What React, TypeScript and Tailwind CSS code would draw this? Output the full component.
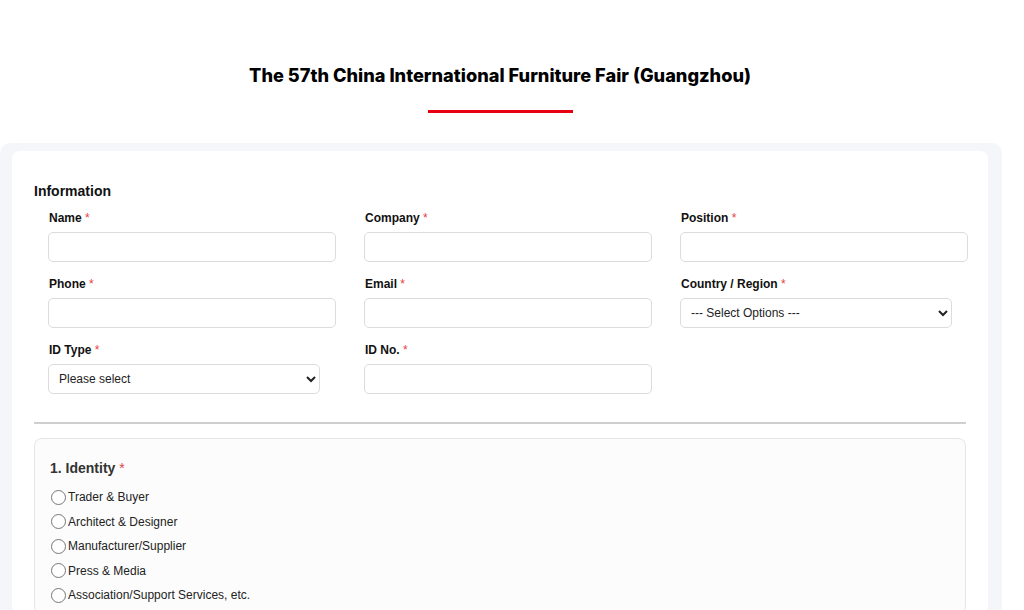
import React from "react";

const Label = ({ text }: { text: string }) => (
  <label className="block text-[12px] font-bold text-[#111] leading-[14px] pt-[1px] mb-[7px] pl-[1px]">
    {text} <span className="text-[#e53e3e] font-normal">*</span>
  </label>
);

const Input = () => (
  <input
    type="text"
    className="block w-full h-[30px] border border-[#dcdcdc] rounded-[5px] bg-white px-2 text-[12px] outline-none"
  />
);

const Select = ({ text, w }: { text: string; w: string }) => (
  <select
    className={`block ${w} h-[30px] border border-[#dcdcdc] rounded-[5px] bg-white pl-[6px] pr-[4px] text-[12px] text-[#222] outline-none`}
    defaultValue=""
  >
    <option value="">{text}</option>
  </select>
);

export default function App() {
  const opts = [
    "Trader & Buyer",
    "Architect & Designer",
    "Manufacturer/Supplier",
    "Press & Media",
    "Association/Support Services, etc.",
  ];
  return (
    <div className="min-h-[610px] bg-white" style={{ fontFamily: '"Liberation Sans", Arial, sans-serif' }}>
      <div className="w-[1000px] pt-[62px] h-[143px] flex flex-col items-center">
        <h1
          className="text-[18.2px] font-extrabold text-black leading-[26px]"
          style={{ fontFamily: 'Inter, "Noto Sans", sans-serif' }}
        >
          The 57th China International Furniture Fair (Guangzhou)
        </h1>
        <div className="mt-[22px] w-[145px] h-[3px] bg-[#e60012]" />
      </div>
      <div className="w-[1002px] bg-[#f5f6fa] rounded-t-[10px] pt-[8px] pl-[12px] pr-[14px] min-h-[467px]">
        <div className="bg-white rounded-[8px] pt-[31px] px-[22px] min-h-[459px]">
          <h2 className="text-[14px] font-bold text-[#111] leading-[18px] mb-[10px]">Information</h2>
          <div className="grid grid-cols-3 gap-x-[28px] gap-y-[14px] ml-[14px] w-[920px]">
            <div>
              <Label text="Name" />
              <Input />
            </div>
            <div>
              <Label text="Company" />
              <Input />
            </div>
            <div>
              <Label text="Position" />
              <Input />
            </div>
            <div>
              <Label text="Phone" />
              <Input />
            </div>
            <div>
              <Label text="Email" />
              <Input />
            </div>
            <div>
              <Label text="Country / Region" />
              <Select text="--- Select Options ---" w="w-[272px]" />
            </div>
            <div>
              <Label text="ID Type" />
              <Select text="Please select" w="w-[272px]" />
            </div>
            <div>
              <Label text="ID No." />
              <Input />
            </div>
          </div>
          <div className="mt-[28px] h-[2px] bg-[#cfcfcf]" />
          <div className="mt-[14px] border border-[#e6e6e6] bg-[#fcfcfc] rounded-[8px] pt-[20px] px-[15px] pb-[10px]">
            <h3 className="text-[14px] font-bold text-[#333] leading-[18px] mb-[12px]">
              1. Identity <span className="text-[#e53e3e] font-normal">*</span>
            </h3>
            <div className="flex flex-col gap-[8.5px]">
              {opts.map((o) => (
                <label key={o} className="flex items-center gap-[2px] text-[12px] text-[#222] leading-[16px]">
                  <input type="radio" name="identity" className="w-[15px] h-[15px] m-0 ml-[1px]" />
                  <span>{o}</span>
                </label>
              ))}
            </div>
          </div>
        </div>
      </div>
    </div>
  );
}
